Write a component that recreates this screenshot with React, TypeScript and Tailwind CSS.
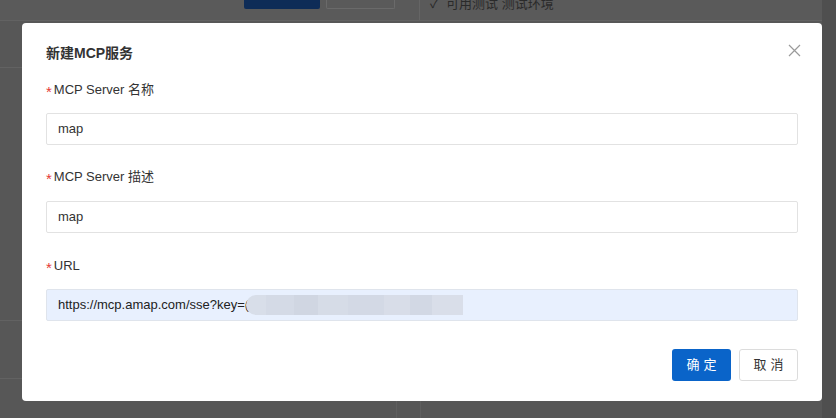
import React from "react";

const font = { fontFamily: '"Liberation Sans", "Noto Sans CJK SC", sans-serif' };

function Label({ text }: { text: string }) {
  return (
    <div className="flex items-center h-[20px] text-[13px] text-[#333333]">
      <span className="text-[#e53935] mr-[2px] text-[15px] leading-none mt-[3px]">*</span>
      <span>{text}</span>
    </div>
  );
}

function Field({ value }: { value: string }) {
  return (
    <div className="h-[32px] border border-[#e2e2e2] rounded-[2px] bg-white flex items-center px-[11px] text-[13px] text-[#333]">
      {value}
    </div>
  );
}

export default function App() {
  const blur = [
    ["#d8dee9", 20],
    ["#d4dae6", 28],
    ["#d0d6e2", 24],
    ["#d6dce7", 30],
    ["#d3d9e5", 36],
    ["#d8dde8", 26],
    ["#d2d8e4", 22],
    ["#d9dee9", 31],
  ] as const;
  return (
    <div className="relative w-[836px] h-[418px] overflow-hidden bg-[#575757]" style={font}>
      {/* background page (dimmed) */}
      <div className="flex flex-col h-full">
        <div className="h-[21px] border-b border-[#626262] bg-[#5a5a5a] flex">
          <div className="w-[420px] flex justify-end items-start gap-[6px] pr-[24px] border-r border-[#656565]">
            <div className="w-[76px] h-[9px] bg-[#0e2c57] rounded-b-[2px]" />
            <div className="w-[69px] h-[9px] border border-[#6a6a6a] border-t-0 rounded-b-[2px]" />
          </div>
          <div className="pl-[10px] text-[13px] text-[#2a2a2a] -mt-[6px] leading-[20px]">✓&nbsp;&nbsp;可用测试&nbsp;测试环境</div>
        </div>
        <div className="flex-1 flex">
          <div className="w-[22px] flex flex-col">
            <div className="h-[47px] border-b border-[#626262]" />
            <div className="h-[253px] border-b border-[#626262]" />
            <div className="h-[58px] border-b border-[#626262]" />
          </div>
          <div className="flex-1" />
        </div>
        <div className="h-[17px] flex">
          <div className="w-[397px] border-r border-[#5f5f5f]" />
          <div className="w-[24px] border-r border-[#5f5f5f]" />
          <div className="flex-1" />
        </div>
      </div>
      <div className="absolute top-0 right-0 w-[14px] h-full bg-[#4f4f4f]" />

      {/* modal */}
      <div className="absolute left-[22px] top-[23px] w-[800px] h-[378px] bg-white rounded-[4px] px-[24px] pt-[18px] flex flex-col">
        <div className="flex items-center justify-between h-[24px]">
          <div className="text-[14px] font-semibold text-[#333]">新建MCP服务</div>
          <svg width="13" height="13" viewBox="0 0 13 13" className="mr-[-3px] mt-[-6px]">
            <path d="M1 1L12 12M12 1L1 12" stroke="#9a9a9a" strokeWidth="1.2" />
          </svg>
        </div>

        <div className="mt-[15px]"><Label text="MCP Server 名称" /></div>
        <div className="mt-[13px]"><Field value="map" /></div>

        <div className="mt-[22px]"><Label text="MCP Server 描述" /></div>
        <div className="mt-[14px]"><Field value="map" /></div>

        <div className="mt-[23px]"><Label text="URL" /></div>
        <div className="mt-[13px] h-[32px] border border-[#dfe4ec] rounded-[2px] bg-[#e8f0fe] flex items-center px-[11px] text-[13px] text-[#222]">
          <span>https://mcp.amap.com/sse?key=(</span>
          <div className="flex h-[20px] ml-[-3px] rounded-l-[10px] overflow-hidden">
            {blur.map(([c, w], i) => (
              <div key={i} className="h-full" style={{ background: c, width: w }} />
            ))}
          </div>
        </div>

        <div className="mt-[28px] flex justify-end gap-[8px]">
          <button className="w-[59px] h-[32px] bg-[#0a64c9] rounded-[3px] text-white text-[13px] tracking-[4px] pl-[4px]">确定</button>
          <button className="w-[59px] h-[32px] border border-[#dcdcdc] bg-white rounded-[3px] text-[#333] text-[13px] tracking-[4px] pl-[4px]">取消</button>
        </div>
      </div>
    </div>
  );
}
